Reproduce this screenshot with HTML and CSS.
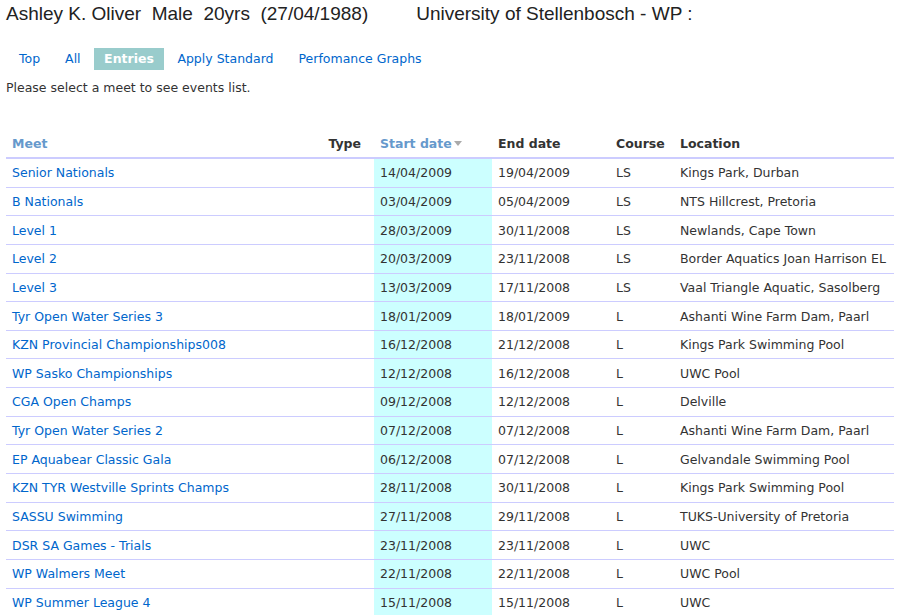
FILE: index.html
```html
<!DOCTYPE html>
<html>
<head>
<meta charset="utf-8">
<link rel="stylesheet" href="styles.css">
</head>
<body>
<h1 class="title">Ashley K. Oliver&nbsp; Male&nbsp; 20yrs&nbsp; (27/04/1988)<span class="club">University of Stellenbosch - WP :</span></h1>
<nav class="tabs">
  <a class="tab" href="#">Top</a>
  <a class="tab" href="#">All</a>
  <a class="tab active" href="#">Entries</a>
  <a class="tab" href="#">Apply Standard</a>
  <a class="tab" href="#">Perfomance Graphs</a>
</nav>
<p class="hint">Please select a meet to see events list.</p>
<table class="meets">
  <colgroup>
    <col class="w-meet"><col class="w-type"><col class="w-start"><col class="w-end"><col class="w-course"><col class="w-loc">
  </colgroup>
  <thead>
    <tr>
      <th><a href="#">Meet</a></th>
      <th class="c-type">Type</th>
      <th><a href="#">Start date</a><span class="sort"></span></th>
      <th>End date</th>
      <th>Course</th>
      <th>Location</th>
    </tr>
  </thead>
  <tbody>
    <tr><td><a href="#">Senior Nationals</a></td><td></td><td class="c-start">14/04/2009</td><td>19/04/2009</td><td>LS</td><td>Kings Park, Durban</td></tr>
    <tr><td><a href="#">B Nationals</a></td><td></td><td class="c-start">03/04/2009</td><td>05/04/2009</td><td>LS</td><td>NTS Hillcrest, Pretoria</td></tr>
    <tr><td><a href="#">Level 1</a></td><td></td><td class="c-start">28/03/2009</td><td>30/11/2008</td><td>LS</td><td>Newlands, Cape Town</td></tr>
    <tr><td><a href="#">Level 2</a></td><td></td><td class="c-start">20/03/2009</td><td>23/11/2008</td><td>LS</td><td>Border Aquatics Joan Harrison EL</td></tr>
    <tr><td><a href="#">Level 3</a></td><td></td><td class="c-start">13/03/2009</td><td>17/11/2008</td><td>LS</td><td>Vaal Triangle Aquatic, Sasolberg</td></tr>
    <tr><td><a href="#">Tyr Open Water Series 3</a></td><td></td><td class="c-start">18/01/2009</td><td>18/01/2009</td><td>L</td><td>Ashanti Wine Farm Dam, Paarl</td></tr>
    <tr><td><a href="#">KZN Provincial Championships008</a></td><td></td><td class="c-start">16/12/2008</td><td>21/12/2008</td><td>L</td><td>Kings Park Swimming Pool</td></tr>
    <tr><td><a href="#">WP Sasko Championships</a></td><td></td><td class="c-start">12/12/2008</td><td>16/12/2008</td><td>L</td><td>UWC Pool</td></tr>
    <tr><td><a href="#">CGA Open Champs</a></td><td></td><td class="c-start">09/12/2008</td><td>12/12/2008</td><td>L</td><td>Delville</td></tr>
    <tr><td><a href="#">Tyr Open Water Series 2</a></td><td></td><td class="c-start">07/12/2008</td><td>07/12/2008</td><td>L</td><td>Ashanti Wine Farm Dam, Paarl</td></tr>
    <tr><td><a href="#">EP Aquabear Classic Gala</a></td><td></td><td class="c-start">06/12/2008</td><td>07/12/2008</td><td>L</td><td>Gelvandale Swimming Pool</td></tr>
    <tr><td><a href="#">KZN TYR Westville Sprints Champs</a></td><td></td><td class="c-start">28/11/2008</td><td>30/11/2008</td><td>L</td><td>Kings Park Swimming Pool</td></tr>
    <tr><td><a href="#">SASSU Swimming</a></td><td></td><td class="c-start">27/11/2008</td><td>29/11/2008</td><td>L</td><td>TUKS-University of Pretoria</td></tr>
    <tr><td><a href="#">DSR SA Games - Trials</a></td><td></td><td class="c-start">23/11/2008</td><td>23/11/2008</td><td>L</td><td>UWC</td></tr>
    <tr><td><a href="#">WP Walmers Meet</a></td><td></td><td class="c-start">22/11/2008</td><td>22/11/2008</td><td>L</td><td>UWC Pool</td></tr>
    <tr><td><a href="#">WP Summer League 4</a></td><td></td><td class="c-start">15/11/2008</td><td>15/11/2008</td><td>L</td><td>UWC</td></tr>
  </tbody>
</table>
</body>
</html>
```
FILE: styles.css
```css
html, body {
  margin: 0;
  padding: 0;
  background: #fff;
}
body {
  padding: 0 6px;
  font-family: "DejaVu Sans", Verdana, sans-serif;
  font-size: 12.5px;
  color: #333;
  overflow: hidden;
}
a {
  color: #0066cc;
  text-decoration: none;
}
.title {
  margin: 0;
  padding-top: 3px;
  font-family: "Liberation Sans", Arial, sans-serif;
  font-weight: normal;
  font-size: 19px;
  line-height: 21px;
  color: #222;
  white-space: nowrap;
}
.club {
  margin-left: 48px;
}
.tabs {
  display: flex;
  align-items: center;
  margin-top: 24px;
  padding-left: 1px;
  height: 22px;
}
.tab {
  display: block;
  padding: 0 12px;
  line-height: 22px;
  margin-right: 1px;
}
.tab.active {
  padding: 0 10.5px;
  background: #99cccc;
  color: #fff;
  font-weight: bold;
}
.hint {
  margin: 10px 0 0 0;
  line-height: 16px;
}
.meets {
  margin-top: 38px;
  width: 888px;
  table-layout: fixed;
  border-collapse: collapse;
  border-spacing: 0;
}
.w-meet { width: 312px; }
.w-type { width: 56px; }
.w-start { width: 118px; }
.w-end { width: 118px; }
.w-course { width: 64px; }
.w-loc { width: 220px; }
.meets th {
  text-align: left;
  font-weight: bold;
  color: #333;
  padding: 2px 6px 0;
  height: 21px;
  vertical-align: top;
  border-bottom: 2px solid #ccccff;
  white-space: nowrap;
}
.meets th a {
  color: #6699cc;
}
.meets th.c-type {
  text-align: right;
  padding-right: 13px;
}
.meets td {
  padding: 0 6px;
  height: 27.65px;
  border-bottom: 1px solid #ccccff;
  white-space: nowrap;
  overflow: hidden;
}
.meets tbody tr:last-child td {
  border-bottom: none;
}
.meets td.c-start {
  background: #ccffff;
}
.sort {
  display: inline-block;
  width: 0;
  height: 0;
  margin-left: 2px;
  vertical-align: 2px;
  border-left: 4px solid transparent;
  border-right: 4px solid transparent;
  border-top: 5px solid #aaa;
}
```
